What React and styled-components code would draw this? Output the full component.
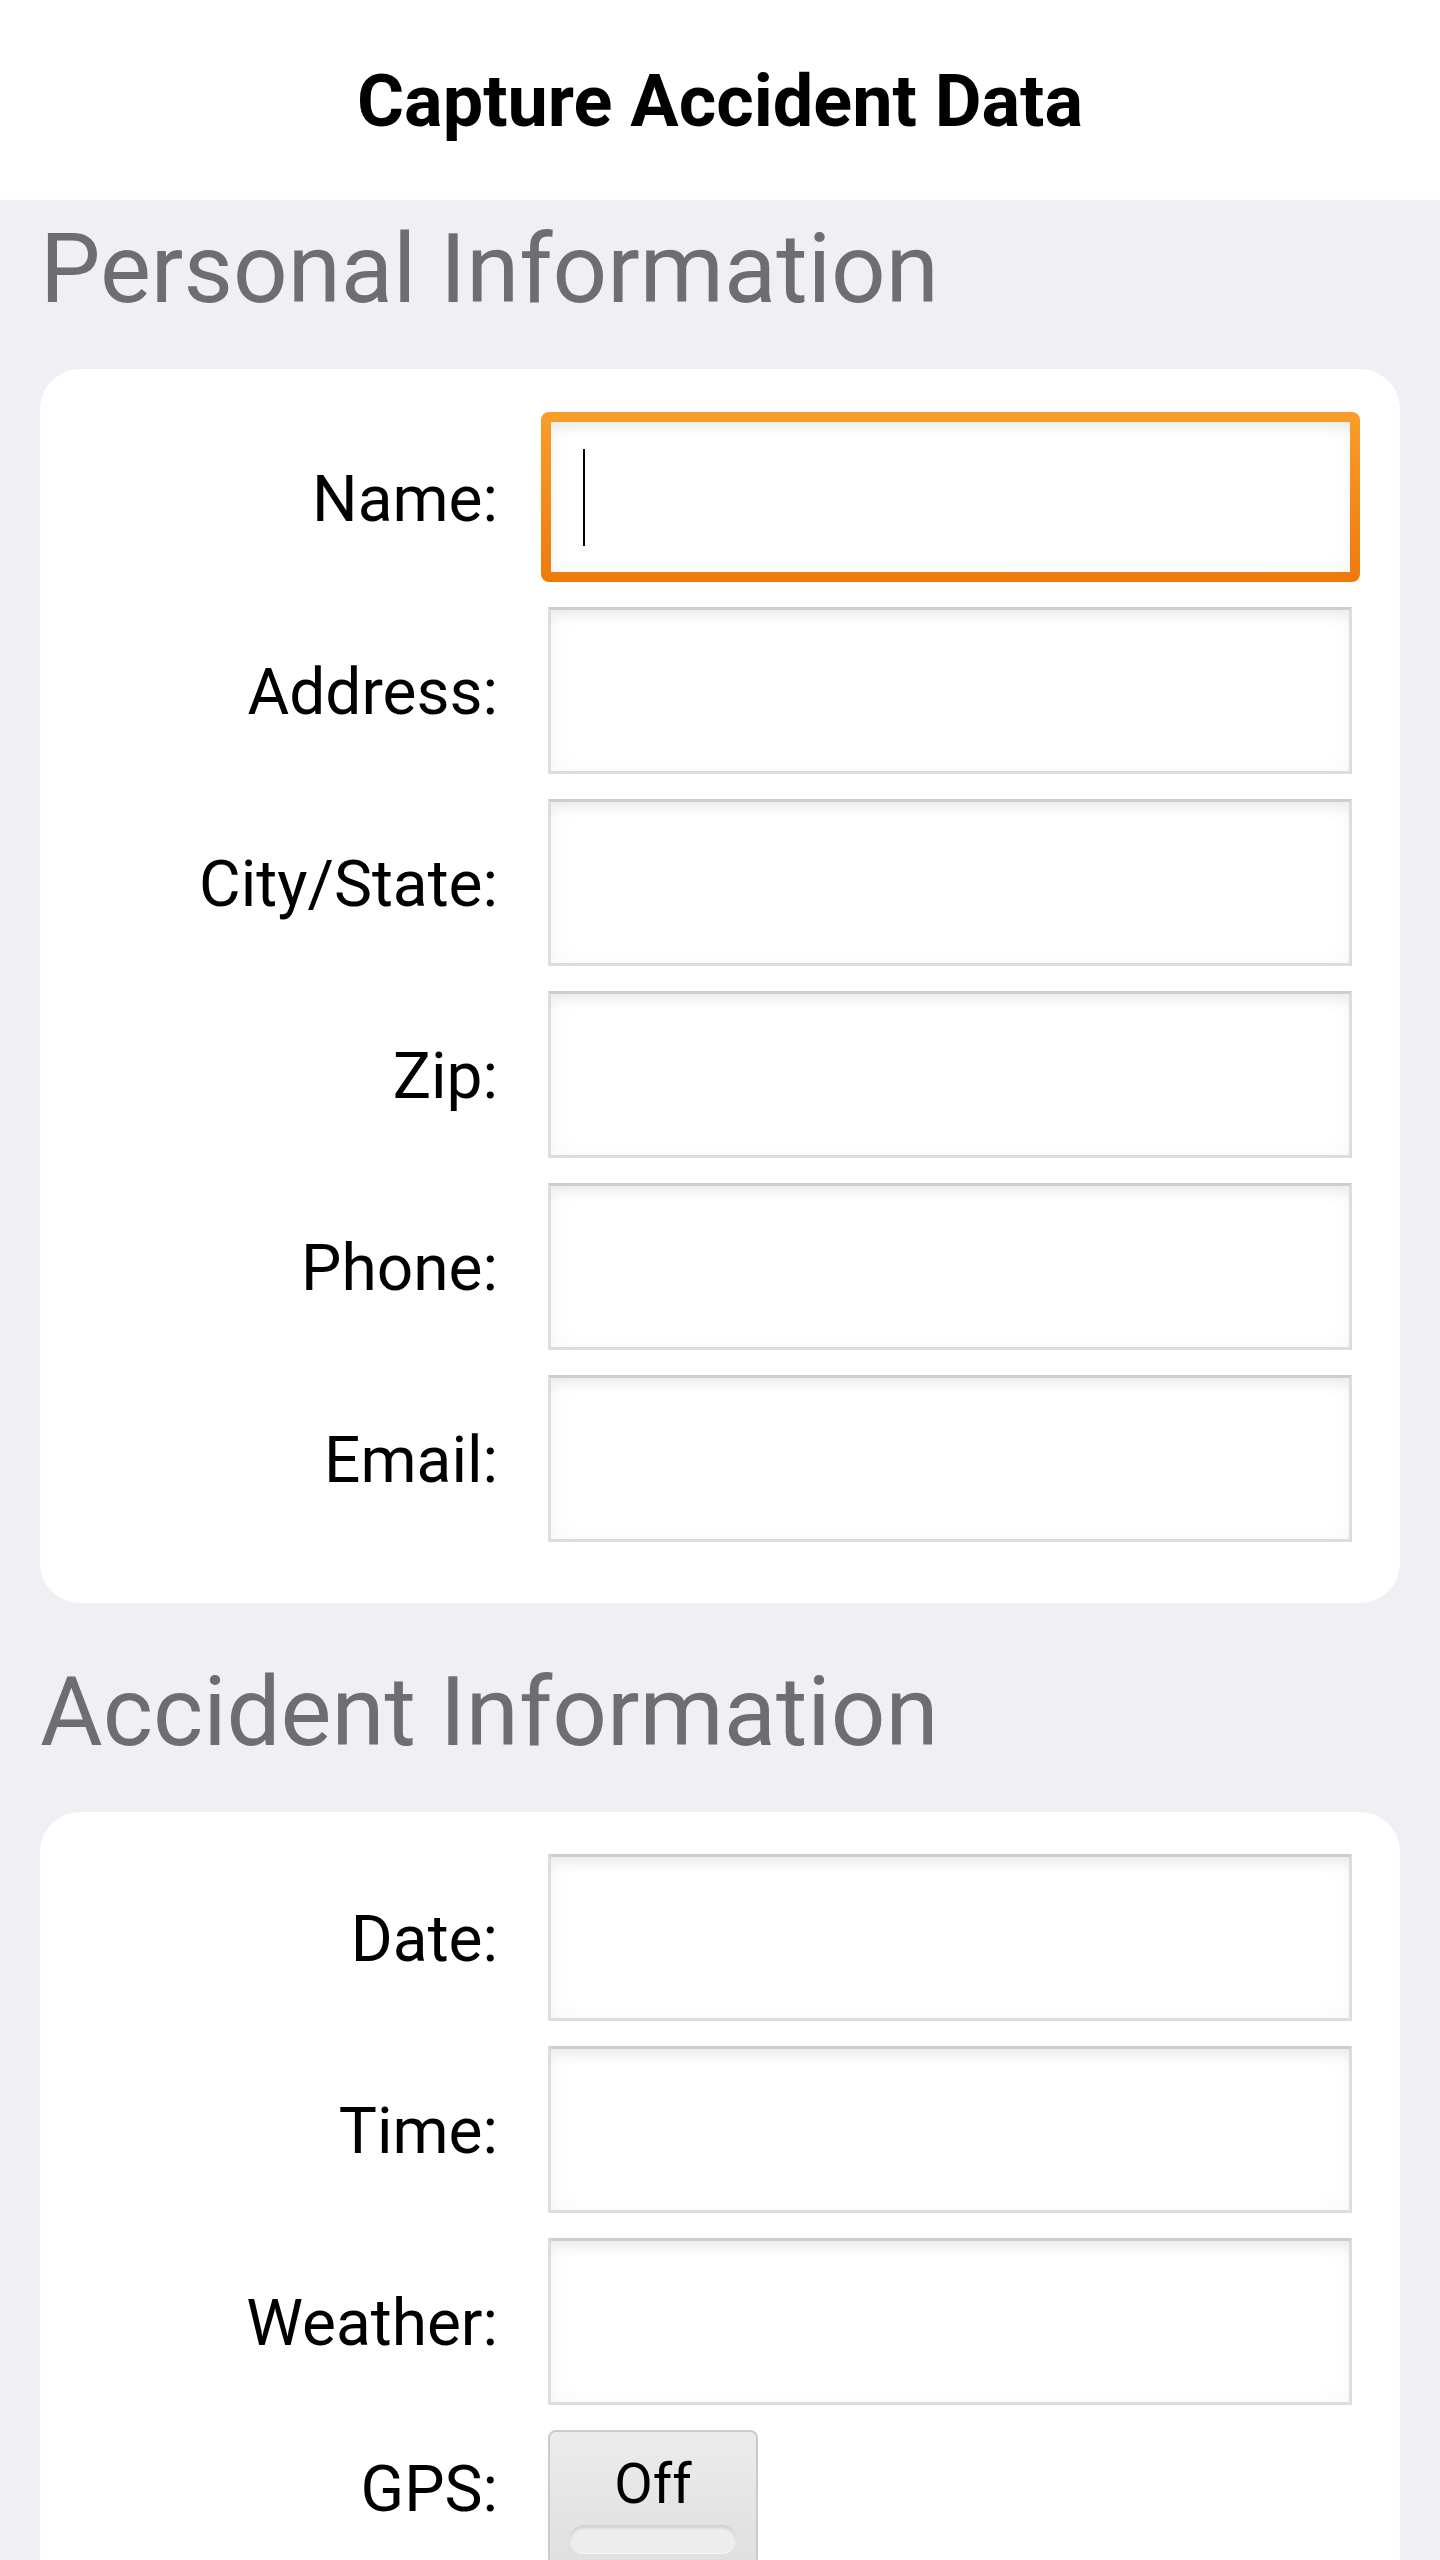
import React from 'react';
import styled, {createGlobalStyle} from 'styled-components';

const GlobalStyle = createGlobalStyle`
    body {
        margin: 0;
        background-color: #efeff4;
        font-family: Roboto, "Liberation Sans", sans-serif;
    }
`;

const Header = styled.header`
    height: 200px;
    background-color: #ffffff;
    display: flex;
    align-items: center;
    justify-content: center;
`;

const Title = styled.h1`
    margin: 4px 0 0;
    font-size: 72px;
    font-weight: 700;
    color: #000;
    line-height: 1;
`;

const Main = styled.main`
    padding: 0 40px;
    display: flex;
    flex-direction: column;
    gap: 40px;
`;

const SectionTitle = styled.h2`
    margin: 12px 0 43px;
    font-size: 96px;
    font-weight: 400;
    line-height: 114px;
    color: #6d6d72;
`;

const Card = styled.div`
    background-color: #ffffff;
    border-radius: 40px;
    padding: ${props => props.$top}px 48px 61px 0;
    display: grid;
    grid-template-columns: 458px 1fr;
    column-gap: 50px;
    row-gap: 25px;
    align-items: center;
`;

const Label = styled.label`
    text-align: right;
    font-size: 64px;
    line-height: 76px;
    color: #000;
    align-self: ${props => props.$top ? 'start' : 'center'};
    padding-top: ${props => props.$top || 5}px;
`;

const Field = styled.div`
    height: 167px;
    box-sizing: border-box;
    background-color: #fff;
    border: 3px solid #dddddd;
    border-top-color: #cdcdcd;
    box-shadow: inset 0 14px 18px -12px rgba(0, 0, 0, 0.09),
        inset 0 0 22px rgba(0, 0, 0, 0.035);
`;

const FocusField = styled.div`
    height: 170px;
    box-sizing: border-box;
    margin: 0 -8px 0 -7px;
    border: 10px solid transparent;
    border-radius: 8px;
    background: linear-gradient(#fff, #fff) padding-box,
        linear-gradient(#f99d2b, #ef7a0a) border-box;
    box-shadow: inset 0 14px 18px -12px rgba(0, 0, 0, 0.09),
        inset 0 0 22px rgba(0, 0, 0, 0.035);
    display: flex;
    align-items: center;
    padding-left: 32px;
`;

const Caret = styled.span`
    width: 2px;
    height: 97px;
    background-color: #000;
`;

const Toggle = styled.button`
    width: 210px;
    height: 170px;
    box-sizing: border-box;
    padding: 19px 22px 0;
    border: 2px solid #cbcbcb;
    border-radius: 8px;
    background: linear-gradient(#ececec, #dcdcdc);
    display: flex;
    flex-direction: column;
    align-items: center;
    font-family: Roboto, "Liberation Sans", sans-serif;
    font-size: 56px;
    line-height: 66px;
    color: #000;
`;

const Track = styled.span`
    margin-top: 8px;
    width: 166px;
    height: 28px;
    border-radius: 14px;
    background-color: #ededed;
    box-shadow: inset 0 3px 3px rgba(0, 0, 0, 0.12), 0 1px 0 rgba(255, 255, 255, 0.8);
`;

const personal = ['Name:', 'Address:', 'City/State:', 'Zip:', 'Phone:', 'Email:'];
const accident = ['Date:', 'Time:', 'Weather:'];

const App = () => {
    return (
        <>
            <GlobalStyle />
            <Header>
                <Title>Capture Accident Data</Title>
            </Header>
            <Main>
                <section>
                    <SectionTitle>Personal Information</SectionTitle>
                    <Card $top={43}>
                        {personal.map((label, i) => (
                            <React.Fragment key={label}>
                                <Label>{label}</Label>
                                {i === 0 ? (
                                    <FocusField role="textbox"><Caret /></FocusField>
                                ) : (
                                    <Field role="textbox" />
                                )}
                            </React.Fragment>
                        ))}
                    </Card>
                </section>
                <section>
                    <SectionTitle>Accident Information</SectionTitle>
                    <Card $top={42}>
                        {accident.map(label => (
                            <React.Fragment key={label}>
                                <Label>{label}</Label>
                                <Field role="textbox" />
                            </React.Fragment>
                        ))}
                        <Label $top={22}>GPS:</Label>
                        <div>
                            <Toggle type="button">
                                Off
                                <Track />
                            </Toggle>
                        </div>
                    </Card>
                </section>
            </Main>
        </>
    );
};

export default App;
